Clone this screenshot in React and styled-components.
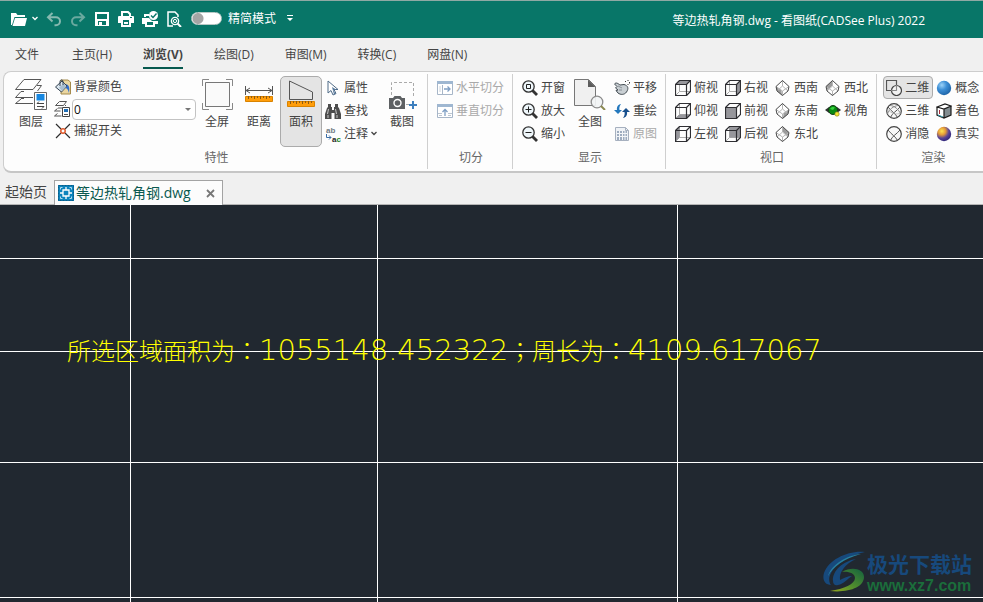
import React from 'react';
import styled, { createGlobalStyle, css } from 'styled-components';

const GlobalStyle = createGlobalStyle`
  * {
    box-sizing: border-box;
  }

  body {
    margin: 0;
    font-family: "Open Sans", "Noto Sans CJK SC", sans-serif;
    font-size: 12px;
    color: #444;
    background: #f0f0f0;
  }

  button, select, input {
    font: inherit;
    color: inherit;
    margin: 0;
  }

  svg {
    display: block;
    flex: none;
  }
`;

/* ---------- small icons (16 x 16) ---------- */

const Small = ({ children }) => (
  <svg width="16" height="16" viewBox="0 0 16 16" fill="none" aria-hidden="true">{children}</svg>
);

const FolderIcon = () => (
  <Small>
    <path d="M0 14V2h5l1.5 2H14v2H3.5L1 14z" fill="#fff" />
    <path d="M4 7h12l-2 8H1.5z" fill="#fff" />
  </Small>
);

const UndoIcon = () => (
  <Small>
    <path d="M6.5 2L2 6.2 6.5 10.4M2.5 6.2H10a4 4 0 0 1 0 8H8.5" stroke="#86b9b0" strokeWidth="2" />
  </Small>
);

const RedoIcon = () => (
  <Small>
    <path d="M9.5 2L14 6.2 9.5 10.4M13.5 6.2H6a4 4 0 0 0 0 8h1.5" stroke="#6aa99f" strokeWidth="2" />
  </Small>
);

const SaveIcon = () => (
  <Small>
    <path d="M1 1h14v14H1zM3 3v5h10V3zM4 10v4h8v-4z" fill="#fff" fillRule="evenodd" />
    <path d="M5 11h3v3H5z" fill="#fff" />
  </Small>
);

const PrintIcon = () => (
  <Small>
    <path d="M4 5V1h6l2 2v2" stroke="#fff" strokeWidth="2" />
    <path d="M0 6a1 1 0 0 1 1-1h14a1 1 0 0 1 1 1v6h-3V9H3v3H0z" fill="#fff" />
    <path d="M4 9v6h8V9M6 12h4" stroke="#fff" strokeWidth="2" />
    <path d="M12 6h2v1h-2z" fill="#087668" />
  </Small>
);

const PrintCheckIcon = () => (
  <Small>
    <path d="M3 6V4h4" stroke="#fff" strokeWidth="2" />
    <path d="M0 7h7l3 3h6v3h-3v-2H3v2H0z" fill="#fff" />
    <path d="M4 11v4h8v-4" stroke="#fff" strokeWidth="2" />
    <circle cx="11.5" cy="4.5" r="4.5" fill="#fff" />
    <path d="M9 4.5l2 2 3.5-4" stroke="#087668" strokeWidth="1.4" />
  </Small>
);

const PreviewIcon = () => (
  <Small>
    <path d="M7 15H2V1h7l3 3v2" stroke="#fff" strokeWidth="1.5" />
    <circle cx="9" cy="10" r="3.6" stroke="#fff" strokeWidth="1.4" />
    <circle cx="9" cy="10" r="1.6" stroke="#fff" />
    <path d="M11.5 12.5L15 16" stroke="#fff" strokeWidth="2" />
  </Small>
);

const Chevron = ({ color = '#fff' }) => (
  <svg width="6" height="5" viewBox="0 0 6 5" fill="none" aria-hidden="true">
    <path d="M.5 1L3 3.5 5.5 1" stroke={color} strokeWidth="1.3" />
  </svg>
);

const MoreIcon = () => (
  <svg width="6" height="7" viewBox="0 0 6 7" aria-hidden="true">
    <path d="M0 0h6v1H0zM0 3h6L3 6z" fill="#fff" />
  </svg>
);

const PaintIcon = () => (
  <Small>
    <path d="M6 1h7l2.5 2v12H6z" fill="#ead6a0" stroke="#a58a4b" />
    <path d="M9 5c5 0 6 3 5 9-1-4-2-5-5-5z" fill="#2f6ed0" />
    <path d="M.5 8L7 2l5 5-5.500 6z" fill="#dce7f0" stroke="#32414f" />
    <path d="M4 8.500L9 4.500l2.500 3L7 12z" fill="#a9bfd0" />
    <path d="M5 7V2.500a1.500 1.500 0 0 1 3 0V6" stroke="#32414f" />
  </Small>
);

const LayerStateIcon = () => (
  <Small>
    <path d="M5.500 .5h7l-3 4h-8zM3.500 7.500L.5 10h6M3.500 12.500l-3 2.500h7M4 7h4M11 4.500h1" stroke="#555" />
    <path d="M8.500 6.500h7v9h-7z" fill="#fff" stroke="#444" />
    <path d="M10 8h4v3h-4z" fill="#1f6fb8" />
    <path d="M10 13.500h4" stroke="#555" />
  </Small>
);

const SnapIcon = () => (
  <Small>
    <path d="M1 1l5 5M10 10l5 5M15 1l-5 5M6 10l-5 5" stroke="#2d2d2d" strokeWidth="1.2" />
    <circle cx="8" cy="8" r="2.2" stroke="#e0592b" strokeWidth="1.5" />
  </Small>
);

const CursorIcon = () => (
  <Small>
    <path d="M3 1v12l3-2.5L8 15l3-1.500L9 9.500h4z" fill="#fff" stroke="#4f6b87" />
    <path d="M7 7l5 3H8.500l2 4-1.500.5z" fill="#57789b" />
  </Small>
);

const FindIcon = () => (
  <Small>
    <path d="M3 1h3v3h1v3h2V4h1V1h3v3l1 1 2 6v5H9.500v-6h-3v6H0v-5l2-6 1-1z" fill="#4d4d4d" />
    <path d="M3.500 6l-1 5M10.500 6l1 5M3 12v3M12 12v3" stroke="#c6c6c6" />
  </Small>
);

/* two letter pairs with an arrow between them */
const NoteIcon = () => (
  <Small>
    <g fontFamily="Liberation Sans, sans-serif" fontWeight="bold">
      <text x="1" y="7" fontSize="8" fill="#727b83">ab</text>
      <text x="7" y="16" fontSize="8" fill="#262626">a<tspan fill="#168321">c</tspan></text>
    </g>
    <path d="M1.500 8v3.500H6M4 9.500l2 2-2 2" stroke="#3b6da5" />
  </Small>
);

const SplitHIcon = () => (
  <Small>
    <path d="M.5 1.500h15v13H.5z" stroke="#a7b6c8" fill="#fff" />
    <path d="M0 1h16v3H0z" fill="#9fb7d1" />
    <path d="M5.500 5v9" stroke="#a7b6c8" />
    <path d="M2 7h2M2 9h2M2 11h2" stroke="#cdd5dd" />
    <path d="M7 9h6M10.500 6.500L13 9l-2.500 2.500" stroke="#7f9fc4" strokeWidth="1.3" />
  </Small>
);

const SplitVIcon = () => (
  <Small>
    <path d="M.5 1.500h15v13H.5z" stroke="#a7b6c8" fill="#fff" />
    <path d="M0 1h16v3H0z" fill="#9fb7d1" />
    <path d="M1 10.500h4M11 10.500h4M2 12.500h3M11 12.500h3" stroke="#bcc6d1" />
    <path d="M8 13V6.500M5.500 9L8 6.500 10.500 9" stroke="#7f9fc4" strokeWidth="1.3" />
  </Small>
);

const ZoomIcon = ({ mark }) => (
  <Small>
    <circle cx="6.5" cy="6.5" r="5.7" fill="#eef6fa" stroke="#333" strokeWidth="1.3" />
    <path d="M10.500 10.500l4.500 4.500" stroke="#333" strokeWidth="2.8" />
    {mark === 'window' && <path d="M4.500 4.500h4v4h-4z" stroke="#222" />}
    {mark === 'in' && <path d="M3.500 6.500h6M6.500 3.500v6" stroke="#222" />}
    {mark === 'out' && <path d="M3.500 6.500h6" stroke="#222" />}
  </Small>
);

const PanIcon = () => (
  <Small>
    <path d="M.5 4C2 2 4 3.500 6 5l4-.5c4 1 5 4 2.500 7.500-2 3-6 3-8.500 1L2 10.500 4 10 1.500 8 3 6.500z" fill="#c9cfd3" stroke="#414a50" />
    <path d="M4 6l4 2M5 10l3 0" stroke="#8a9298" />
    <path d="M11 1.500h1M13.500 .5h1M15.500 2v1.500M13.500 4.500h1" stroke="#333" />
  </Small>
);

const RedrawIcon = () => (
  <Small>
    <path d="M7 1C4 1.500 2.500 4 3 7H0l4 4 4-4H5.500C5 5 5.500 3 7 1z" fill="#2478bd" />
    <path d="M9 15c3-.5 4.500-3 4-6h3l-4-4-4 4h2.500c.5 2 0 4-1.500 6z" fill="#174f8d" />
  </Small>
);

const OriginalIcon = () => (
  <Small>
    <path d="M1.500 1.500h10l3 3v10h-13z" fill="#eff2f6" stroke="#a6b0bf" />
    <path d="M11.500 1.500v3h3" stroke="#a6b0bf" />
    <path d="M3 5h10v9H3z" fill="#9eacbf" />
    <path d="M3 7.500h10M3 10.500h10M5.500 5v9M8.500 5v9M11 5v9" stroke="#f3f5f8" />
  </Small>
);

const CUBE_FACES = {
  top: 'M4.5 .5h11l-4 4h-11z',
  bottom: 'M4.5 11.5h11l-4 4h-11z',
  left: 'M.5 4.5l4-4v11l-4 4z',
  right: 'M11.5 4.5l4-4v11l-4 4z',
  front: 'M.5 4.5h11v11H.5z',
  back: 'M4.5 .5h11v11h-11z',
};

const CubeIcon = ({ face }) => (
  <Small>
    {face !== 'front' && <path d="M4.500 1v10.500H15M4.500 11.500l-4 4" stroke="#aaa" />}
    <path d={CUBE_FACES[face]} fill="#97979c" />
    <path d="M.5 4.500h11v11H.5zM.5 4.500l4-4h11l-4 4M15.500 .5v11l-4 4" stroke="#2f2f33" strokeWidth="1.2" />
  </Small>
);

const ISO_FACES = {
  sw: 'M1 6.500l5.500 4 .5 5-5-4.500z',
  se: 'M14 6.500l-5.500 4-.5 5 5-4.500z',
  ne: 'M7.500 .5L14 6.500l-1.500 3.500L8 6z',
  nw: 'M7.500 .5L1 6.500 2.500 10 7 6z',
};

const IsoIcon = ({ face }) => (
  <Small>
    <path d="M7.500 .5l6.500 6-1 4.500-5.500 4.500L2 11 1 6.500z" fill="#fff" />
    <path d={ISO_FACES[face]} fill="#9b9b9b" />
    <path d="M1 6.500l6.500 4.500L14 6.500M7.500 11v4.500M7.500 .5V6L2 11M7.500 6l5.500 5" stroke="#b5b5b5" />
    <path d="M7.500 .5l6.500 6-1 4.500-5.500 4.500L2 11 1 6.500z" stroke="#4a4a4a" />
  </Small>
);

const OrbitIcon = () => (
  <Small>
    <path d="M0 7l4-3h8l4 3-4 3H4z" fill="#2d3330" />
    <circle cx="8" cy="7" r="4.5" fill="#098a12" stroke="#173d19" />
    <path d="M5 6c1-2.500 4-2.500 5-1.500L8 7z" fill="#35d33c" />
    <circle cx="12" cy="11" r="2.2" fill="#f4e733" stroke="#7a7318" strokeWidth=".6" />
  </Small>
);

const Shape2dIcon = () => (
  <Small>
    <path d="M.5 .5h10v10H.5z" stroke="#555" strokeWidth="1.2" />
    <circle cx="10.5" cy="10.5" r="5" fill="#fff" fillOpacity=".5" stroke="#444" strokeWidth="1.2" />
    <path d="M10.500 5v5.500H5" stroke="#888" />
  </Small>
);

const WireSphereIcon = ({ full }) => (
  <Small>
    <circle cx="8" cy="8" r="7.3" fill="#f8f8f8" stroke="#444" strokeWidth="1.2" />
    <path d="M2 4c3 4 8 7 9.500 10.500M14 4C11 8 6 10 4.500 14.500" stroke="#555" />
    {full && <path d="M4 2.500c4 0 9 4 10.500 8.500M12 2.500C8 3 3 6 1.500 11" stroke="#888" />}
    {full && <path d="M1.500 6c4 5 9 6 13 4" stroke="#aaa" strokeWidth=".7" />}
  </Small>
);

const ConceptIcon = () => (
  <Small>
    <defs>
      <radialGradient id="concept" cx=".35" cy=".3" r=".75">
        <stop offset="0" stopColor="#9cd2f7" />
        <stop offset=".45" stopColor="#3d8fd6" />
        <stop offset="1" stopColor="#1c62a6" />
      </radialGradient>
    </defs>
    <circle cx="8" cy="8" r="7.2" fill="url(#concept)" />
  </Small>
);

const RealIcon = () => (
  <Small>
    <defs>
      <radialGradient id="real" cx=".35" cy=".3" r=".75">
        <stop offset="0" stopColor="#ffe44f" />
        <stop offset=".35" stopColor="#e39a3a" />
        <stop offset=".65" stopColor="#5b4599" />
        <stop offset="1" stopColor="#2b2477" />
      </radialGradient>
    </defs>
    <circle cx="8" cy="8" r="7.2" fill="url(#real)" />
  </Small>
);

const ShadeIcon = () => (
  <Small>
    <path d="M1 4l8-3 6 2-7 3zM1 4l7 2v9l-7-3z" fill="#fff" />
    <path d="M8 6l7-3v9l-7 3z" fill="#828c90" />
    <path d="M1 4l8-3 6 2-7 3zM1 4v8l7 3 7-3V3M8 6v9" stroke="#1b1b1b" strokeWidth="1.2" />
    <path d="M3.500 11V7" stroke="#a62e3b" />
    <path d="M2 12l5 2" stroke="#38a2b1" />
  </Small>
);

const DwgIcon = () => (
  <Small>
    <path d="M0 0h16v16H0z" fill="#0d84bd" />
    <path d="M.5 .5h15v15H.5z" stroke="#0a5d87" strokeDasharray="2 1" />
    <path d="M5 5h6v6H5zM8 2v3M8 11v3M2 8h3M11 8h3" stroke="#fff" strokeWidth="1.3" />
    <path d="M2.500 4.500v-2h2M11.500 2.500h2v2M13.500 11.500v2h-2M4.500 13.500h-2v-2" stroke="#b5def1" />
  </Small>
);

/* ---------- large icons (32 x 32) ---------- */

const Large = ({ children }) => (
  <svg width="32" height="32" viewBox="0 0 32 32" fill="none" aria-hidden="true">{children}</svg>
);

const LayersIcon = () => (
  <Large>
    <path d="M9 1.500h17L18 11.500H.5z" stroke="#555" />
    <path d="M6 13.500L.5 19.500H18M22 7.500h4.500l-4 5.500M6 21L.5 25.500H18M6 13.500h3M6 20.500h3" stroke="#555" />
    <path d="M19.500 14.500h12v17h-12z" fill="#fff" stroke="#666" />
    <path d="M21.500 16h8v6.500h-8z" fill="#1787e0" />
    <path d="M22 25.500h7M24 23.500l-2 2M29 28.500h-7M27 30.500l2-2" stroke="#444" />
  </Large>
);

const FullScreenIcon = () => (
  <Large>
    <path d="M4.500 4.500h24v24h-24z" fill="#fafafa" stroke="#777" />
    <path d="M1.500 8V1.500H8M25 1.500h6.500V8M31.500 25v6.500H25M8 31.500H1.500V25" stroke="#888" />
  </Large>
);

const Ruler = ({ y }) => (
  <>
    <path d={`M2.5 ${y + 0.5}h27v5h-27z`} fill="#ff9d0a" stroke="#d98300" />
    <path d={`M5.5 ${y}v3M8.5 ${y}v2M11.5 ${y}v3M14.5 ${y}v2M17.5 ${y}v3M20.5 ${y}v2M23.5 ${y}v3M26.5 ${y}v2`} stroke="#8c5b12" />
  </>
);

const DistanceIcon = () => (
  <Large>
    <path d="M2.500 8v9M29.500 8v9M3 12.500h26M7 10l-4 2.500L7 15M25 10l4 2.500-4 2.500" stroke="#555" />
    <Ruler y={18} />
  </Large>
);

const AreaIcon = () => (
  <Large>
    <path d="M4.500 3v18.500h23V14z" stroke="#555" />
    <Ruler y={23} />
  </Large>
);

const CaptureIcon = () => (
  <Large>
    <path d="M5.500 17V4.500h22V20M20 26.500h3" stroke="#aaa" strokeDasharray="3 2" />
    <path d="M3 20h4l1.500-2h6l1.500 2h3v11H3z" fill="#5d6063" />
    <circle cx="11.500" cy="25" r="3.5" fill="#5d6063" stroke="#fff" strokeWidth="1.4" />
    <path d="M27 23v8M23 27h8" stroke="#3d7fbe" strokeWidth="2" />
  </Large>
);

const WholeIcon = () => (
  <Large>
    <path d="M.5 1.500h14l7 7v19H.5z" fill="#f0f0f0" stroke="#777" />
    <path d="M14 1.500v7.500h7.500z" fill="#5c5c5c" />
    <circle cx="23" cy="24" r="5.8" fill="#f2f4f5" fillOpacity=".9" stroke="#8c8c8c" strokeWidth="1.3" />
    <path d="M27 28l4 4" stroke="#8b8950" strokeWidth="2" />
  </Large>
);

/* ---------- layout ---------- */

const Window = styled.div`
  min-height: 100vh;
  display: flex;
  flex-direction: column;
  overflow: hidden;
`;

const TitleBar = styled.header`
  display: flex;
  align-items: center;
  height: 38px;
  padding: 0 58px 2px 11px;
  border-top: 1px solid #8fa9a4;
  background: #087668;
  color: #fff;
`;

const QuickAccess = styled.div`
  display: flex;
  align-items: center;
  gap: 8px;
`;

const IconButton = styled.button`
  display: flex;
  align-items: center;
  gap: 5px;
  padding: 0;
  border: 0;
  background: none;
`;

const ToggleLabel = styled.label`
  display: flex;
  align-items: center;
  gap: 6px;
  padding: 0 3px 0 1px;
  line-height: 16px;
`;

const Toggle = styled.input`
  appearance: none;
  width: 31px;
  height: 13px;
  border: 1px solid #b8c8c5;
  border-radius: 7px;
  background: radial-gradient(circle at 6px 50%, #a5a5a5 5px, #fff 6px);
`;

const WindowTitle = styled.h1`
  margin: 2px 0 0 auto;
  font-size: 12px;
  font-weight: 400;
`;

const MenuBar = styled.nav`
  display: flex;
  gap: 31px;
  height: 33px;
  padding: 3px 15px 2px;
`;

const MenuItem = styled.button`
  padding: 0;
  border: 0;
  border-bottom: 2px solid transparent;
  background: none;
  white-space: nowrap;

  &:first-child {
    margin-right: 2px;
  }

  ${({ $active }) => $active && css`
    border-color: #06594e;
    font-weight: 700;
  `}
`;

const Ribbon = styled.section`
  display: flex;
  margin-left: 3px;
  padding: 2px 0;
  border: 1px solid #cdcdcd;
  border-right: 0;
  border-bottom: 2px solid #c6c6c6;
  border-radius: 8px 0 0 8px;
  background: #fdfdfd;
  overflow: hidden;
`;

const Group = styled.div`
  flex: none;
  padding: 2px 4px 0 6px;
  border-right: 1px solid #cfcfcf;

  &:last-child {
    border-right: 0;
  }
`;

const GroupBody = styled.div`
  display: flex;
  height: 71px;
`;

const GroupTitle = styled.div`
  line-height: 22px;
  text-align: center;
  color: #666;
`;

const Column = styled.div`
  display: flex;
  flex-direction: column;
  min-width: ${({ $width }) => $width || 50}px;
`;

const ToolButton = styled.button`
  display: flex;
  align-items: center;
  gap: 3px;
  height: ${({ $compact }) => ($compact ? 22 : 23)}px;
  padding: 0 3px 0 2px;
  border: 1px solid ${({ $pressed }) => ($pressed ? '#ababab' : 'transparent')};
  border-radius: 4px;
  background: ${({ $pressed }) => ($pressed ? '#e4e4e4' : 'none')};
  line-height: 20px;
  white-space: nowrap;

  &:disabled {
    color: #a9a9a9;
  }
`;

const BigButton = styled.button`
  display: flex;
  flex-direction: column;
  align-items: center;
  gap: 2px;
  width: 42px;
  height: 71px;
  padding: 1px 0;
  border: 1px solid ${({ $pressed }) => ($pressed ? '#ababab' : 'transparent')};
  border-radius: 5px;
  background: ${({ $pressed }) => ($pressed ? '#e4e4e4' : 'none')};
  line-height: 20px;
`;

const LayerField = styled.label`
  display: flex;
  align-items: center;
  gap: 2px;
  height: 22px;
  padding: 0 0 0 2px;
`;

const SelectBox = styled.span`
  position: relative;
  flex: 1;
  display: flex;
`;

const LayerSelect = styled.select`
  appearance: none;
  width: 100%;
  height: 21px;
  padding: 0 1px;
  border: 1px solid #c3c3c3;
  border-radius: 4px;
  background: #fff;
  color: #111;
`;

const SelectArrow = styled.span`
  position: absolute;
  right: 5px;
  top: 9px;
  border: 3px solid transparent;
  border-top-color: #777;
  border-bottom: 0;
  pointer-events: none;
`;

const TabStrip = styled.div`
  display: flex;
  align-items: flex-end;
  height: 32px;
  font-size: 14px;
  border-bottom: 1px solid #b5b5b5;
`;

const StartTab = styled.button`
  width: 54px;
  height: 24px;
  padding: 0 0 0 5px;
  border: 0;
  background: none;
  text-align: left;
  line-height: 22px;
`;

const FileTab = styled.div`
  display: flex;
  align-items: center;
  width: 169px;
  height: 25px;
  margin-bottom: -1px;
  padding: 0 7px 0 3px;
  border: 1px solid #a3a3a3;
  border-bottom: 0;
  background: #fcfcfc;
`;

const FileButton = styled.button`
  display: flex;
  align-items: center;
  gap: 2px;
  padding: 0;
  border: 0;
  background: none;
  color: #0a594f;
  line-height: 22px;
  white-space: nowrap;
`;

const CloseButton = styled.button`
  margin-left: auto;
  padding: 0;
  border: 0;
  background: none;
`;

const Canvas = styled.main`
  position: relative;
  flex: 1;
  min-height: 397px;
  background: #212830;
  overflow: hidden;
`;

const GridLines = styled.svg`
  position: absolute;
  inset: 0;
  width: 100%;
  height: 100%;
`;

const Measurement = styled.p`
  position: absolute;
  left: 67px;
  top: 129px;
  display: flex;
  align-items: baseline;
  margin: 0;
  color: #ff0;
  font-family: "Noto Sans CJK SC", sans-serif;
  font-size: 24px;
  font-weight: 300;
  line-height: 32px;
  white-space: nowrap;
`;

const Digits = styled.span`
  font-family: "DejaVu Sans Light", "DejaVu Sans", sans-serif;
  font-size: 29px;
  font-weight: 200;
`;

/* the traditional face centres full-width punctuation */
const Mark = styled.span`
  font-family: "Noto Sans CJK TC", sans-serif;
`;

const Watermark = styled.div`
  position: absolute;
  right: 11px;
  bottom: 7px;
  display: flex;
  align-items: center;
  gap: 2px;
`;

const SiteName = styled.div`
  color: #17497c;
  font-family: "Noto Sans CJK SC", sans-serif;
  font-size: 21px;
  font-weight: 700;
  line-height: 28px;
`;

const SiteUrl = styled.div`
  color: #1b6d3b;
  font-family: "Liberation Sans", sans-serif;
  font-size: 16px;
  font-weight: 700;
  line-height: 18px;
`;

const SiteLogo = () => (
  <svg width="42" height="42" viewBox="0 0 42 42" aria-hidden="true">
    <defs>
      <linearGradient id="swoosh" x1="0" y1="1" x2="1" y2="0">
        <stop offset="0" stopColor="#9aa81f" />
        <stop offset=".4" stopColor="#56902c" />
        <stop offset="1" stopColor="#12613f" />
      </linearGradient>
    </defs>
    <path d="M42 1C26-1 6 8 1 22c-2 7 1 12 7 12C1 25 15 7 42 1z" fill="#17497c" />
    <path d="M38 3C24 4 8 14 5 25c5-9 15-17 33-22z" fill="#287f9d" />
    <path d="M33 8C20 10 9 20 10 30c0 3 2 5 5 4 6-1 9-6 14-9-4 0-8 2-12 4-1-8 5-16 16-21z" fill="#17497c" />
    <path d="M19 21c10-6 22-3 22 5 0 10-15 16-34 14 14-2 25-7 25-13 0-5-7-7-13-6z" fill="url(#swoosh)" />
  </svg>
);

/* ---------- ribbon contents ---------- */

const MENU = ['文件', '主页(H)', '浏览(V)', '绘图(D)', '审图(M)', '转换(C)', '网盘(N)'];

const VIEW_COLUMNS = [
  [
    ['俯视', <CubeIcon face="top" />],
    ['仰视', <CubeIcon face="bottom" />],
    ['左视', <CubeIcon face="left" />],
  ],
  [
    ['右视', <CubeIcon face="right" />],
    ['前视', <CubeIcon face="front" />],
    ['后视', <CubeIcon face="back" />],
  ],
  [
    ['西南', <IsoIcon face="sw" />],
    ['东南', <IsoIcon face="se" />],
    ['东北', <IsoIcon face="ne" />],
  ],
  [
    ['西北', <IsoIcon face="nw" />],
    ['视角', <OrbitIcon />],
  ],
];

const RENDER_COLUMNS = [
  [
    ['二维', <Shape2dIcon />],
    ['三维', <WireSphereIcon full />],
    ['消隐', <WireSphereIcon />],
  ],
  [
    ['概念', <ConceptIcon />],
    ['着色', <ShadeIcon />],
    ['真实', <RealIcon />],
  ],
];

const Tool = ({ icon, label, ...rest }) => (
  <ToolButton {...rest}>{icon}{label}</ToolButton>
);

const BigTool = ({ icon, label, ...rest }) => (
  <BigButton {...rest}>{icon}{label}</BigButton>
);

const ToolColumns = ({ columns, pressed }) => columns.map((tools) => (
  <Column key={tools[0][0]}>
    {tools.map(([label, icon]) => (
      <Tool key={label} icon={icon} label={label} $pressed={label === pressed} />
    ))}
  </Column>
));

const RibbonGroup = ({ title, children }) => (
  <Group>
    <GroupBody>{children}</GroupBody>
    <GroupTitle>{title}</GroupTitle>
  </Group>
);

const App = () => {
  return (
    <Window>
      <GlobalStyle />
      <TitleBar>
        <QuickAccess>
          <IconButton aria-label="打开"><FolderIcon /><Chevron /></IconButton>
          <IconButton aria-label="撤销"><UndoIcon /></IconButton>
          <IconButton aria-label="重做"><RedoIcon /></IconButton>
          <IconButton aria-label="保存"><SaveIcon /></IconButton>
          <IconButton aria-label="打印"><PrintIcon /></IconButton>
          <IconButton aria-label="批量打印"><PrintCheckIcon /></IconButton>
          <IconButton aria-label="打印预览"><PreviewIcon /></IconButton>
          <ToggleLabel>
            <Toggle type="checkbox" role="switch" />
            精简模式
          </ToggleLabel>
          <IconButton aria-label="自定义"><MoreIcon /></IconButton>
        </QuickAccess>
        <WindowTitle>等边热轧角钢.dwg - 看图纸(CADSee Plus) 2022</WindowTitle>
      </TitleBar>

      <MenuBar>
        {MENU.map((name) => (
          <MenuItem key={name} $active={name === '浏览(V)'}>{name}</MenuItem>
        ))}
      </MenuBar>

      <Ribbon>
        <RibbonGroup title="特性">
          <BigTool icon={<LayersIcon />} label="图层" />
          <Column $width={144}>
            <Tool $compact icon={<PaintIcon />} label="背景颜色" />
            <LayerField>
              <LayerStateIcon />
              <SelectBox>
                <LayerSelect aria-label="图层" defaultValue="0">
                  <option>0</option>
                </LayerSelect>
                <SelectArrow />
              </SelectBox>
            </LayerField>
            <Tool $compact icon={<SnapIcon />} label="捕捉开关" />
          </Column>
          <BigTool icon={<FullScreenIcon />} label="全屏" />
          <BigTool icon={<DistanceIcon />} label="距离" />
          <BigTool $pressed icon={<AreaIcon />} label="面积" />
          <Column $width={59}>
            <Tool icon={<CursorIcon />} label="属性" />
            <Tool icon={<FindIcon />} label="查找" />
            <ToolButton><NoteIcon />注释<Chevron color="#444" /></ToolButton>
          </Column>
          <BigTool icon={<CaptureIcon />} label="截图" />
        </RibbonGroup>

        <RibbonGroup title="切分">
          <Column>
            <Tool disabled icon={<SplitHIcon />} label="水平切分" />
            <Tool disabled icon={<SplitVIcon />} label="垂直切分" />
          </Column>
        </RibbonGroup>

        <RibbonGroup title="显示">
          <Column>
            <Tool icon={<ZoomIcon mark="window" />} label="开窗" />
            <Tool icon={<ZoomIcon mark="in" />} label="放大" />
            <Tool icon={<ZoomIcon mark="out" />} label="缩小" />
          </Column>
          <BigTool icon={<WholeIcon />} label="全图" />
          <Column>
            <Tool icon={<PanIcon />} label="平移" />
            <Tool icon={<RedrawIcon />} label="重绘" />
            <Tool disabled icon={<OriginalIcon />} label="原图" />
          </Column>
        </RibbonGroup>

        <RibbonGroup title="视口">
          <ToolColumns columns={VIEW_COLUMNS} />
        </RibbonGroup>

        <RibbonGroup title="渲染">
          <ToolColumns columns={RENDER_COLUMNS} pressed="二维" />
        </RibbonGroup>
      </Ribbon>

      <TabStrip>
        <StartTab>起始页</StartTab>
        <FileTab>
          <FileButton><DwgIcon />等边热轧角钢.dwg</FileButton>
          <CloseButton aria-label="关闭">
            <svg width="9" height="9" viewBox="0 0 9 9" aria-hidden="true">
              <path d="M1 1l7 7M8 1L1 8" stroke="#777" strokeWidth="1.8" />
            </svg>
          </CloseButton>
        </FileTab>
      </TabStrip>

      <Canvas>
        <GridLines aria-hidden="true" stroke="#fff">
          <line x1="130.5" y1="0" x2="130.5" y2="100%" />
          <line x1="377.5" y1="0" x2="377.5" y2="100%" />
          <line x1="677.5" y1="0" x2="677.5" y2="100%" />
          <line x1="0" y1="53.5" x2="100%" y2="53.5" />
          <line x1="0" y1="146.5" x2="100%" y2="146.5" />
          <line x1="0" y1="257.5" x2="100%" y2="257.5" />
          <line x1="0" y1="392.5" x2="100%" y2="392.5" />
        </GridLines>
        <Measurement>
          所选区域面积为<Mark>：</Mark><Digits>1055148.452322</Digits>
          <Mark>；</Mark>周长为<Mark>：</Mark><Digits>4109.617067</Digits>
        </Measurement>
        <Watermark>
          <SiteLogo />
          <div>
            <SiteName>极光下载站</SiteName>
            <SiteUrl>www.xz7.com</SiteUrl>
          </div>
        </Watermark>
      </Canvas>
    </Window>
  );
};

export default App;
